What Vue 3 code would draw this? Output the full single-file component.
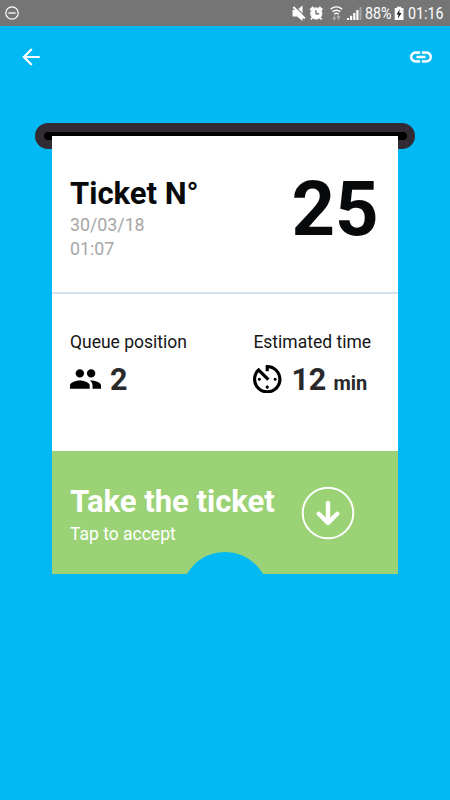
<script setup>
const ticket = { number: 25, date: '30/03/18', time: '01:07', position: 2, wait: 12 }
</script>

<template>
  <div class="screen">
    <header class="status">
      <svg class="dnd" viewBox="0 0 16 16">
        <circle cx="8" cy="8" r="6.2" />
        <path d="M4.3 8h7.4" />
      </svg>
      <svg class="indicators" viewBox="0 0 160 26">
        <path d="M2.500 10h4.500l5.500-4.500v15.500l-5.500-4.500H2.500z" fill="#fff" />
        <path d="M4.500 6L16 17.600" stroke="#757575" stroke-width="1.200" />
        <path d="M3.300 7L14.800 18.600" stroke="#fff" stroke-width="2.100" />
        <g fill="none" stroke="#fff">
          <path d="M20.300 10l3.200-2.900M32.300 10l-3.200-2.900" stroke-width="2.200" />
          <circle cx="26.300" cy="13.500" r="5.600" fill="#fff" stroke-width="1" />
          <path d="M22.300 17.800l-1.400 1.800M30.300 17.800l1.400 1.800" stroke-width="1.700" />
          <path d="M26 10v3.700h3.200" stroke="#757575" stroke-width="1.400" />
        </g>
        <g fill="none" stroke="#fff" stroke-width="1.500">
          <path d="M40.600 9.200c3.500-3 8.200-3 11.700 0M42.600 11.700c2.400-1.900 5.300-1.900 7.700 0M44.400 14.100c1.200-.9 3-.9 4.200 0" />
          <path d="M44.300 15.500v4.200M42.800 17.800l1.500 1.700 1.500-1.700M48.500 20v-4.200M47 17.500l1.500-1.600 1.500 1.600" stroke="#b4b4b4" stroke-width="1.100" />
        </g>
        <path d="M57 18h2.200v2H57zM60 15.700h2.200V20H60zM63.200 13h2.200v7h-2.200zM66.300 10h2.200v10h-2.200z" fill="#fff" />
        <path d="M69.500 7h2v13h-2z" fill="#a5a5a5" />
        <text x="75" y="19.400" textLength="26.500" lengthAdjust="spacingAndGlyphs">88%</text>
        <path d="M104.700 8h2.300V6.700h4.200V8h2.300v12h-8.800z" fill="#fff" />
        <path d="M109.700 9.300l-3.200 5.300h2l-.7 4.200 3.800-5.800h-2.300z" fill="#222" />
        <text x="118" y="19.400" textLength="35.500" lengthAdjust="spacingAndGlyphs">01:16</text>
      </svg>
    </header>

    <nav class="toolbar">
      <svg class="back" viewBox="0 0 24 24"><path d="M20 11H7.830l5.590-5.590L12 4l-8 8 8 8 1.410-1.410L7.830 13H20z" /></svg>
      <svg class="link" viewBox="0 0 24 24"><path d="M3.900 12c0-1.710 1.390-3.100 3.100-3.100h4V7H7c-2.760 0-5 2.240-5 5s2.240 5 5 5h4v-1.900H7c-1.710 0-3.100-1.390-3.100-3.100zM8 13h8v-2H8v2zm9-6h-4v1.900h4c1.710 0 3.100 1.390 3.100 3.100s-1.390 3.100-3.100 3.100h-4V17h4c2.760 0 5-2.240 5-5s-2.240-5-5-5z" /></svg>
    </nav>

    <main class="dispenser">
      <div class="slot"><div class="slot-gap"></div></div>
      <article class="ticket">
        <section class="heading">
          <div>
            <h1>Ticket N°</h1>
            <p class="stamp">{{ ticket.date }}</p>
            <p class="stamp">{{ ticket.time }}</p>
          </div>
          <strong class="number">{{ ticket.number }}</strong>
        </section>
        <section class="details">
          <div class="detail">
            <p class="label">Queue position</p>
            <div class="value">
              <svg class="people" viewBox="1 5 22 14"><path d="M16 11c1.660 0 2.990-1.340 2.990-3S17.660 5 16 5c-1.660 0-3 1.340-3 3s1.340 3 3 3zm-8 0c1.660 0 2.990-1.340 2.990-3S9.660 5 8 5C6.340 5 5 6.340 5 8s1.340 3 3 3zm0 2c-2.330 0-7 1.170-7 3.500V19h14v-2.500c0-2.330-4.670-3.500-7-3.500zm8 0c-.290 0-.620.020-.970.050 1.160.840 1.970 1.970 1.970 3.450V19h6v-2.500c0-2.330-4.670-3.500-7-3.500z" /></svg>
              <strong>{{ ticket.position }}</strong>
            </div>
          </div>
          <div class="detail">
            <p class="label">Estimated time</p>
            <div class="value">
              <svg class="timer" viewBox="3 3 18 18"><path d="M11 17c0 .550.450 1 1 1s1-.450 1-1-.450-1-1-1-1 .450-1 1zm0-14v4h2V5.080c3.390.490 6 3.390 6 6.920 0 3.870-3.130 7-7 7s-7-3.130-7-7c0-1.680.590-3.220 1.580-4.420L12 13l1.410-1.410-6.800-6.800v.020C4.420 6.450 3 9.050 3 12c0 4.970 4.020 9 9 9 4.970 0 9-4.030 9-9s-4.030-9-9-9h-1zm7 9c0-.550-.450-1-1-1s-1 .450-1 1 .450 1 1 1 1-.450 1-1zM6 12c0 .550.450 1 1 1s1-.450 1-1-.450-1-1-1-1 .450-1 1z" /></svg>
              <strong>{{ ticket.wait }}</strong><span class="unit">min</span>
            </div>
          </div>
        </section>
        <section class="accept">
          <div>
            <h2>Take the ticket</h2>
            <p class="hint">Tap to accept</p>
          </div>
          <svg class="down" viewBox="0 0 54 54">
            <circle cx="27" cy="27" r="25.300" stroke-width="2" />
            <path d="M27 17v19.500M17.800 27.800l9.200 9.200 9.200-9.200" stroke-width="4.400" />
          </svg>
          <div class="notch"></div>
        </section>
      </article>
    </main>
  </div>
</template>

<style>
body {
  margin: 0;
  background: #02b9f3;
}
</style>

<style scoped>
.screen {
  width: 450px;
  height: 800px;
  overflow: hidden;
  background: #02b9f3;
  font-family: Roboto, "Liberation Sans", sans-serif;
}
h1, h2, p {
  margin: 0;
}
svg {
  display: block;
  flex: none;
}
.status {
  display: flex;
  justify-content: space-between;
  height: 26px;
  background: #757575;
}
.dnd {
  width: 16px;
  height: 16px;
  margin: 5px 0 0 4px;
  fill: none;
  stroke: #fff;
  stroke-width: 1.3;
}
.indicators {
  width: 160px;
  height: 26px;
}
.indicators text {
  fill: #fff;
  font-size: 16.500px;
}
.toolbar {
  display: flex;
  justify-content: space-between;
  align-items: center;
  height: 62px;
  padding: 0 16px 0 18px;
  fill: #fff;
}
.back, .link {
  width: 26px;
  height: 26px;
}
.link {
  stroke: #fff;
  stroke-width: 0.4;
}
.dispenser {
  display: flex;
  flex-direction: column;
  align-items: center;
  padding-top: 35px;
}
.slot {
  box-sizing: border-box;
  width: 380px;
  height: 25.500px;
  padding: 8.500px;
  border-radius: 13px;
  background: #332b34;
}
.slot-gap {
  height: 8.500px;
  border-radius: 5px;
  background: #000;
}
.ticket {
  width: 345.400px;
  margin-top: -13px;
  background: #fff;
}
.heading {
  box-sizing: border-box;
  display: flex;
  justify-content: space-between;
  height: 158.500px;
  padding: 39px 19px 0 17.700px;
  border-bottom: 2px solid #d3e3ee;
}
h1 {
  color: #08090b;
  font-size: 31px;
  line-height: 38px;
}
.stamp {
  color: #a6a6a6;
  font-size: 17.800px;
  line-height: 24px;
}
.number {
  color: #08090b;
  font-size: 76px;
  line-height: 68px;
}
.details {
  box-sizing: border-box;
  display: grid;
  grid-template-columns: 183.400px 1fr;
  height: 157px;
  padding: 36px 0 0 17.700px;
}
.label {
  color: #151515;
  font-size: 17.500px;
  line-height: 24px;
}
.value {
  display: flex;
  align-items: center;
  height: 50px;
  color: #29292c;
  font-size: 30.500px;
}
.value svg {
  fill: #000;
}
.people {
  width: 31px;
  height: 20px;
  margin-right: 9px;
}
.timer {
  width: 28.500px;
  height: 28.500px;
  margin-right: 9.500px;
}
.unit {
  margin: 7px 0 0 7px;
  font-size: 20px;
  font-weight: 700;
}
.accept {
  position: relative;
  box-sizing: border-box;
  display: flex;
  justify-content: space-between;
  height: 122.500px;
  padding: 32px 43.200px 0 17.700px;
  overflow: hidden;
  background: #9cd276;
  color: #fff;
}
h2 {
  font-size: 31px;
  line-height: 38px;
}
.hint {
  font-size: 17.500px;
  line-height: 26px;
}
.down {
  width: 54px;
  height: 54px;
  margin-top: 2.500px;
  fill: none;
  stroke: #fff;
  stroke-linecap: round;
  stroke-linejoin: round;
}
.notch {
  position: absolute;
  top: 100.500px;
  left: 50%;
  width: 88px;
  height: 88px;
  margin-left: -44px;
  border-radius: 50%;
  background: #02b9f3;
}
</style>
